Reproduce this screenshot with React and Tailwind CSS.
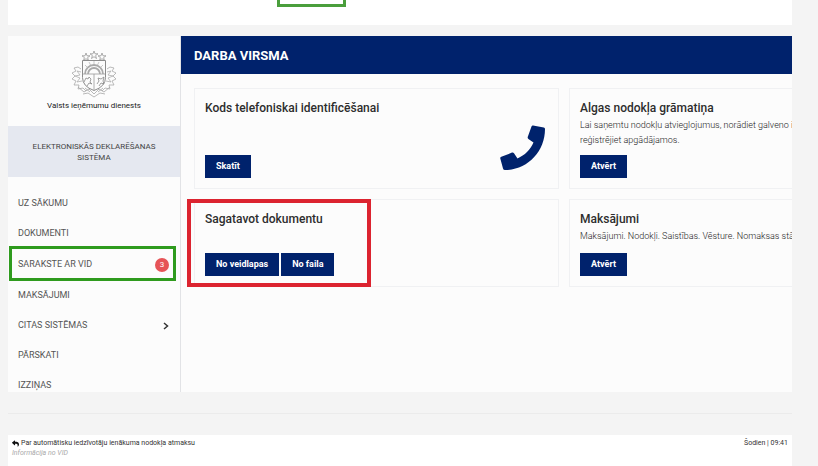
import { FaReply } from "react-icons/fa";

const navItems = [
  { label: "UZ SĀKUMU" },
  { label: "DOKUMENTI" },
  { label: "SARAKSTE AR VID", badge: 3, marked: true },
  { label: "MAKSĀJUMI" },
  { label: "CITAS SISTĒMAS", expandable: true },
  { label: "PĀRSKATI" },
  { label: "IZZIŅAS" },
];

const STAR = "M0-4 1-1.2 4-1.2 1.6.6 2.5 3.5 0 1.7-2.5 3.5-1.6.6-4-1.2-1-1.2Z";

function CoatOfArms() {
  return (
    <svg viewBox="1 0 46 48" className="size-12" fill="none" stroke="#999" strokeWidth="0.8" role="img" aria-label="Latvijas ģerbonis">
      <path d={STAR} transform="translate(16 7)" />
      <path d={STAR} transform="translate(24 5)" />
      <path d={STAR} transform="translate(32 7)" />
      <path d="M12.500 10.500h23v17q0 9-11.500 13-11.500-4-11.500-13Z" stroke="#8c8c8c" strokeWidth="1" />
      <path d="M12.500 24h23M24 24v16" />
      <path d="M15 24a9 9 0 0 1 18 0M18 24a6 6 0 0 1 12 0" stroke="#aaa" strokeWidth="1.800" />
      <path d="M24 11v3M19 12l1.500 3M29 12l-1.500 3M15 15l2.500 2.500M33 15l-2.500 2.500" stroke="#bbb" />
      <path d="M14 32l2-4 2 1 1-2 2 2-1 3 2 2-3-1-2 3M27 34l2-3-1-3 3 1 3-2-1 4 1 3-3-1-2 3" stroke="#888" />
      <path d="M11 19l-3-2-4 1 2 3-4 2 3 3-3 3 4 2-2 4 5 0-1 4 5-1 3 3M37 19l3-2 4 1-2 3 4 2-3 3 3 3-4 2 2 4-5 0 1 4-5-1-3 3" stroke="#aaa" />
      <path d="M11 22l-4-1 3 4-5 1 5 2-3 4 5-1M37 22l4-1-3 4 5 1-5 2 3 4-5-1" stroke="#b0b0b0" />
      <path d="M8 37l6 5 5-3 5 5 5-5 5 3 6-5M13 44l5-1 6 4 6-4 5 1M15 38l5 4M33 38l-5 4" stroke="#a6a6a6" />
    </svg>
  );
}

function PhoneIcon() {
  return (
    <svg viewBox="0 0 45 45" className="size-[45px]" fill="currentColor" aria-hidden="true">
      <path d="M33 .5 43.800 2.600Q45 2.900 45 4C45 27 27 45 5 45Q3.400 45 3 43.500L.3 33.500Q0 32.300 1.300 31.800L12 27.600Q13.200 27.200 14 28.200L17.500 33.500C25 30 30 25 33.500 17.500L28.400 14Q27.300 13.100 27.800 11.800L31.500 1.500Q32 .3 33 .5Z" />
    </svg>
  );
}

function NavItem({ label, badge, marked, expandable }) {
  return (
    <li className={marked ? "relative h-8" : "h-[30px]"}>
      <a href="#" className="flex h-full items-center justify-between pl-[10px] pr-[11px] text-[9px] text-[#555]">
        {label}
        {badge && (
          <span className="flex size-[14px] items-center justify-center rounded-full bg-[#e65457] text-[8px] text-white">{badge}</span>
        )}
        {expandable && (
          <svg viewBox="0 0 6 8" className="h-2 w-[6px]" fill="none" stroke="#333" strokeWidth="1.500" aria-hidden="true">
            <path d="M1 1l3.500 3L1 7" />
          </svg>
        )}
      </a>
      {marked && <div className="pointer-events-none absolute -top-[3px] bottom-0 left-px right-1 border-[3px] border-[#2f9b1e]" />}
    </li>
  );
}

function Button({ children }) {
  return <button type="button" className="h-[23px] bg-[#00226c] px-[11px] text-[9px] font-bold text-white">{children}</button>;
}

function Card({ title, text, actions, icon, marked }) {
  return (
    <section className="relative flex flex-col items-start border border-[#f0f1f3] px-[10px] pb-[10px] pt-[9px]">
      <h2 className="text-[12px] leading-5 font-medium text-[#2d2d2d]">{title}</h2>
      {text && <p className="whitespace-pre text-[9px] leading-[15px] font-light text-[#222]">{text}</p>}
      <div className="mt-auto flex gap-[2px]">
        {actions.map((a) => (
          <Button key={a}>{a}</Button>
        ))}
      </div>
      {icon && <div className="absolute bottom-[18px] right-[13px] text-[#00226c]">{icon}</div>}
      {marked && <div className="pointer-events-none absolute -bottom-px -left-2 -top-px w-[184px] border-4 border-[#dc2430]" />}
    </section>
  );
}

export default function App() {
  return (
    <div className="flex h-screen flex-col overflow-hidden bg-[#f4f4f4] pl-2 pr-[26px] font-['Roboto','Liberation_Sans',sans-serif]">
      <div className="h-[25px] shrink-0 bg-white pl-[269px]">
        <div className="h-[7px] w-[69px] border-x-[3px] border-b-[3px] border-[#4a9e3c]" />
      </div>

      <div className="mt-[11px] flex h-[356px] shrink-0 overflow-hidden bg-[#fcfcfc]">
        <aside className="w-[173px] shrink-0 border-r border-[#e2e3e6]">
          <div className="flex h-[90px] flex-col items-center pt-[14px]">
            <CoatOfArms />
            <p className="mt-[2px] text-[8px] leading-3 text-[#222]">Valsts ieņēmumu dienests</p>
          </div>
          <div className="flex h-[51px] items-center justify-center bg-[#e5e8f0] text-center text-[8px] leading-[11px] text-[#444]">
            <p>
              ELEKTRONISKĀS DEKLARĒŠANAS
              <br />
              SISTĒMA
            </p>
          </div>
          <nav className="pt-3">
            <ul>
              {navItems.map((item) => (
                <NavItem key={item.label} {...item} />
              ))}
            </ul>
          </nav>
        </aside>

        <main className="min-w-0 flex-1 overflow-hidden">
          <header className="flex h-[38px] items-center bg-[#00226c] pl-[13px] pt-px">
            <h1 className="text-[13px] font-bold text-white">DARBA VIRSMA</h1>
          </header>
          <div className="grid w-[753px] grid-cols-2 grid-rows-[101px_88px] gap-[10px] pl-[13px] pt-[14px]">
            <Card title="Kods telefoniskai identificēšanai" actions={["Skatīt"]} icon={<PhoneIcon />} />
            <Card
              title="Algas nodokļa grāmatiņa"
              text={"Lai saņemtu nodokļu atvieglojumus, norādiet galveno i\nreģistrējiet apgādājamos."}
              actions={["Atvērt"]}
            />
            <Card title="Sagatavot dokumentu" actions={["No veidlapas", "No faila"]} marked />
            <Card title="Maksājumi" text="Maksājumi. Nodokļi. Saistības. Vēsture. Nomaksas stā" actions={["Atvērt"]} />
          </div>
        </main>
      </div>

      <hr className="mt-[21px] shrink-0 border-[#ebebeb]" />

      <div className="mt-[21px] flex flex-1 items-start justify-between bg-white px-1 pt-[3px] text-[7px] leading-[10px] text-[#333]">
        <div>
          <p className="flex items-center gap-[2px]">
            <FaReply size={7} color="#111" aria-hidden="true" />
            Par automātisku iedzīvotāju ienākuma nodokļa atmaksu
          </p>
          <p className="italic text-[#aaa]">Informācija no VID</p>
        </div>
        <time>Šodien | 09:41</time>
      </div>
    </div>
  );
}
